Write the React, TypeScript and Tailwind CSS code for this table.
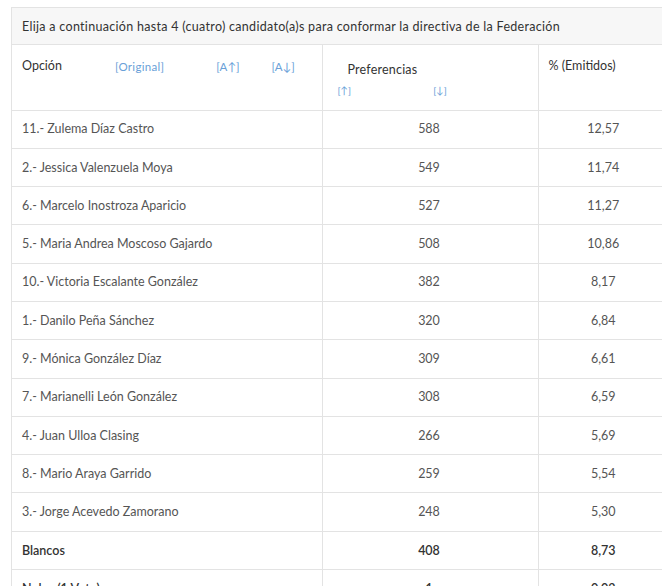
const rows = [
  { name: "11.- Zulema Díaz Castro", votes: "588", pct: "12,57" },
  { name: "2.- Jessica Valenzuela Moya", votes: "549", pct: "11,74" },
  { name: "6.- Marcelo Inostroza Aparicio", votes: "527", pct: "11,27" },
  { name: "5.- Maria Andrea Moscoso Gajardo", votes: "508", pct: "10,86" },
  { name: "10.- Victoria Escalante González", votes: "382", pct: "8,17" },
  { name: "1.- Danilo Peña Sánchez", votes: "320", pct: "6,84" },
  { name: "9.- Mónica González Díaz", votes: "309", pct: "6,61" },
  { name: "7.- Marianelli León González", votes: "308", pct: "6,59" },
  { name: "4.- Juan Ulloa Clasing", votes: "266", pct: "5,69" },
  { name: "8.- Mario Araya Garrido", votes: "259", pct: "5,54" },
  { name: "3.- Jorge Acevedo Zamorano", votes: "248", pct: "5,30" },
];

function App() {
  return (
    <div className="h-[586px] w-[662px] overflow-hidden bg-white pl-[11px] pt-[7px] font-['Lato',sans-serif]">
      <div className="w-[660px] border border-[#e3e3e3]">
        <div className="h-[37px] border-b border-[#e3e3e3] bg-[#f7f7f7] pl-[10px] pt-[10px] text-[12.5px] tracking-[0.3px] text-[#333]">
          Elija a continuación hasta 4 (cuatro) candidato(a)s para conformar la directiva de la Federación
        </div>
        <table className="w-full table-fixed border-collapse text-[12.5px]">
          <colgroup>
            <col className="w-[310px]" />
            <col className="w-[216px]" />
            <col />
          </colgroup>
          <thead>
            <tr className="h-[65px] border-b border-[#e3e3e3] align-top">
              <th className="pl-[10px] pt-[12px] text-left font-normal text-[#333]">
                <div className="flex items-center">
                  <span>Opción</span>
                  <a href="#" className="ml-[53px] text-[11.5px] tracking-[0.3px] text-[#6a9fd8]">[Original]</a>
                  <a href="#" className="ml-[52px] text-[11.5px] text-[#6a9fd8]">[A↑]</a>
                  <a href="#" className="ml-[32px] text-[11.5px] text-[#6a9fd8]">[A↓]</a>
                </div>
              </th>
              <th className="border-l border-[#e3e3e3] pl-[15px] pt-[16px] text-left font-normal text-[#333]">
                <div className="pl-[10px] tracking-[0.2px]">Preferencias</div>
                <div className="mt-[3px] flex text-[10px] text-[#6a9fd8]">
                  <a href="#">[↑]</a>
                  <a href="#" className="ml-[82px]">[↓]</a>
                </div>
              </th>
              <th className="border-l border-[#e3e3e3] pl-[10px] pt-[12px] text-left font-normal text-[#333]">
                % (Emitidos)
              </th>
            </tr>
          </thead>
          <tbody className="text-[#555]">
            {rows.map((r) => (
              <tr key={r.name} className="h-[38.3px] border-b border-[#e3e3e3]">
                <td className="pl-[10px] pt-[1px]">{r.name}</td>
                <td className="border-l border-[#e3e3e3] pr-[2px] pt-[1px] text-center">{r.votes}</td>
                <td className="border-l border-[#e3e3e3] pr-[2px] pt-[1px] text-center">{r.pct}</td>
              </tr>
            ))}
            <tr className="h-[38.3px] border-b border-[#e3e3e3] font-semibold text-[#333]">
              <td className="pl-[10px] pt-[1px]">Blancos</td>
              <td className="border-l border-[#e3e3e3] pr-[2px] pt-[1px] text-center">408</td>
              <td className="border-l border-[#e3e3e3] pr-[2px] pt-[1px] text-center">8,73</td>
            </tr>
            <tr className="h-[38.3px] border-b border-[#e3e3e3] font-semibold text-[#333]">
              <td className="pl-[10px] pt-[1px]">Nulos (1 Voto)</td>
              <td className="border-l border-[#e3e3e3] pr-[2px] pt-[1px] text-center">1</td>
              <td className="border-l border-[#e3e3e3] pr-[2px] pt-[1px] text-center">0,02</td>
            </tr>
          </tbody>
        </table>
      </div>
    </div>
  );
}

export default App;
